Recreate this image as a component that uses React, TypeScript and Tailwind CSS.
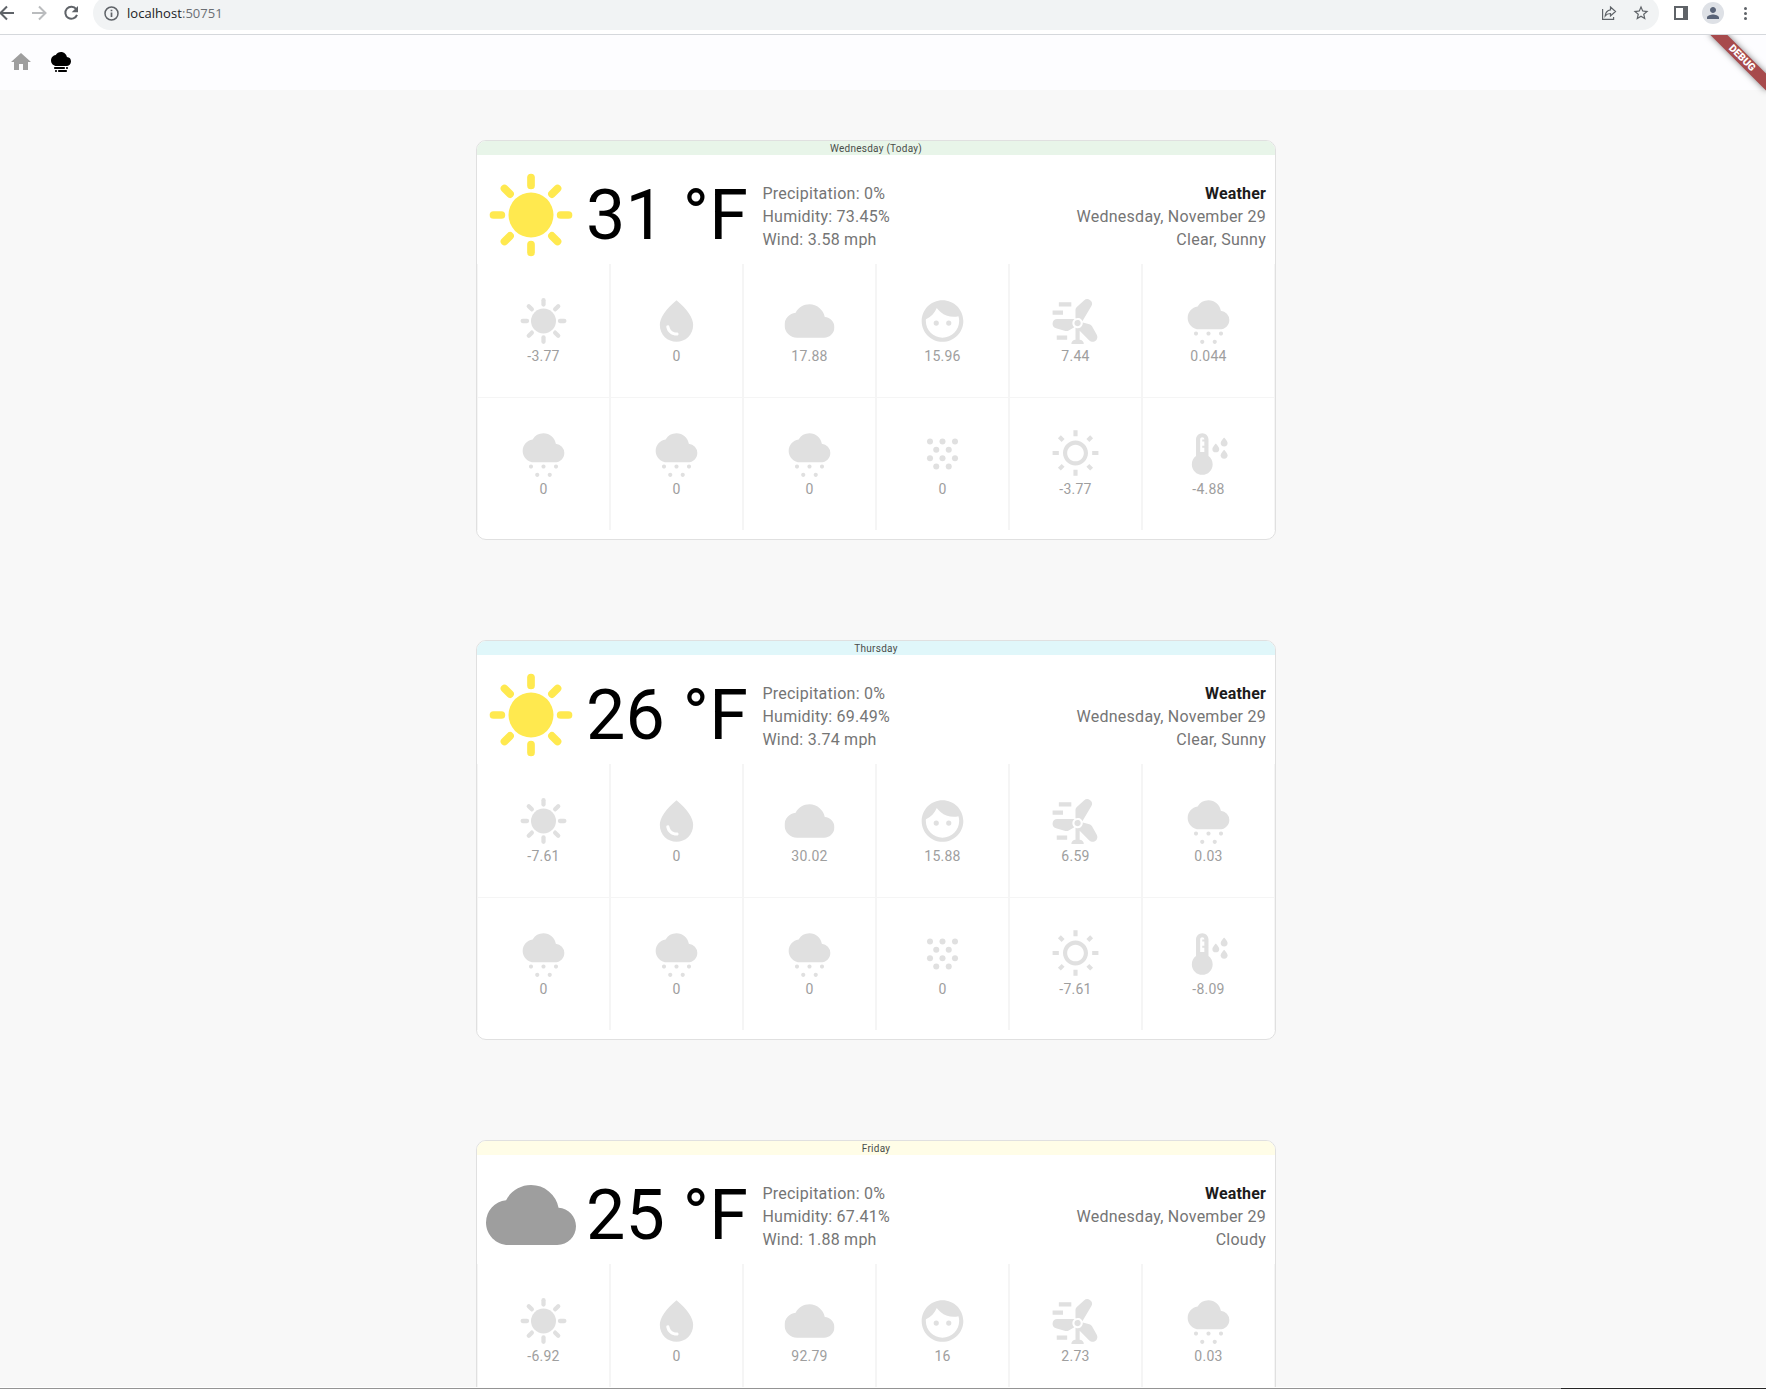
import type { ReactNode } from "react";
import { MdCloud, MdCloudySnowing, MdFace, MdFoggy, MdHome, MdOutlineWbSunny, MdPerson, MdStarOutline, MdWaterDrop, MdWindPower } from "react-icons/md";

const rays = [0, 45, 90, 135, 180, 225, 270, 315];

function Sun({ className }: { className: string }) {
  return (
    <svg viewBox="0 0 24 24" className={className} fill="currentColor" stroke="currentColor">
      <circle cx="12" cy="12" r="6" stroke="none" />
      {rays.map((a) => (
        <path key={a} d="M12 2v2.1" strokeWidth="2.05" strokeLinecap="round" transform={`rotate(${a} 12 12)`} />
      ))}
    </svg>
  );
}

const flakes: [number, number][] = [
  [6, 6], [12, 6], [18, 6], [9, 10], [15, 10], [6, 14], [12, 14], [18, 14], [9, 18], [15, 18],
];

function Flakes() {
  return (
    <svg viewBox="0 0 24 24" className="size-[50px]" fill="currentColor">
      {flakes.map(([x, y]) => (
        <circle key={`${x}-${y}`} cx={x} cy={y} r="1.45" />
      ))}
    </svg>
  );
}

const drops: [number, number][] = [[19.5, 4.1], [15.5, 6.9], [19.5, 10]];

function DewPoint() {
  return (
    <svg viewBox="0 0 24 24" className="size-[50px]" fill="currentColor">
      <path
        fillRule="evenodd"
        d="M12 13V5c0-1.66-1.34-3-3-3S6 3.34 6 5v8c-1.21.91-2 2.37-2 4 0 2.76 2.24 5 5 5s5-2.24 5-5c0-1.63-.79-3.09-2-4zM8 11V5c0-.55.45-1 1-1s1 .45 1 1h-1v1h1v2h-1v1h1v2H8z"
      />
      {drops.map(([x, y]) => (
        <path key={y} d="M0 0S-1.65 1.700-1.650 2.650a1.650 1.650 0 0 0 3.300 0C1.650 1.700 0 0 0 0z" transform={`translate(${x} ${y})`} />
      ))}
    </svg>
  );
}

const snow = <MdCloudySnowing className="size-[50px]" />;
const cellIcons: ReactNode[] = [
  <Sun className="size-[50px]" />,
  <MdWaterDrop className="size-[50px]" />,
  <MdCloud className="size-[50px]" />,
  <MdFace className="size-[50px]" />,
  <MdWindPower className="size-[50px]" />,
  snow,
  snow,
  snow,
  snow,
  <Flakes />,
  <MdOutlineWbSunny className="size-[50px]" />,
  <DewPoint />,
];

type Day = {
  title: string;
  strip: string;
  icon: ReactNode;
  temp: string;
  humidity: string;
  wind: string;
  sky: string;
  values: string[];
};

const days: Day[] = [
  {
    title: "Wednesday (Today)",
    strip: "bg-[#e8f5e9]",
    icon: <Sun className="size-[90px] text-[#ffe94f]" />,
    temp: "31 °F",
    humidity: "73.45%",
    wind: "3.58 mph",
    sky: "Clear, Sunny",
    values: ["-3.77", "0", "17.88", "15.96", "7.44", "0.044", "0", "0", "0", "0", "-3.77", "-4.88"],
  },
  {
    title: "Thursday",
    strip: "bg-[#e0f7fa]",
    icon: <Sun className="size-[90px] text-[#ffe94f]" />,
    temp: "26 °F",
    humidity: "69.49%",
    wind: "3.74 mph",
    sky: "Clear, Sunny",
    values: ["-7.61", "0", "30.02", "15.88", "6.59", "0.03", "0", "0", "0", "0", "-7.61", "-8.09"],
  },
  {
    title: "Friday",
    strip: "bg-[#fffde7]",
    icon: <MdCloud className="size-[90px] text-[#9e9e9e]" />,
    temp: "25 °F",
    humidity: "67.41%",
    wind: "1.88 mph",
    sky: "Cloudy",
    values: ["-6.92", "0", "92.79", "16", "2.73", "0.03"],
  },
];

function DayCard({ day }: { day: Day }) {
  return (
    <section className="h-[400px] w-[800px] shrink-0 overflow-hidden rounded-[10px] border border-[#e0e0e0] bg-white">
      <h2 className={`h-[14px] pt-px text-center text-[10px] leading-[14px] tracking-[0.25px] text-[#4a4d4a] ${day.strip}`}>{day.title}</h2>
      <div className="flex h-[109px] items-start pt-[15px] pr-[9px] pl-[9px]">
        {day.icon}
        <div className="ml-[10px] w-[176.4px] pt-px text-[70px] leading-[88px] tracking-[0.25px] whitespace-pre text-black">{day.temp}</div>
        <div className="pt-[12px] text-[16px] leading-[23px] tracking-[0.25px] text-[#757575]">
          <p>Precipitation: 0%</p>
          <p>Humidity: {day.humidity}</p>
          <p>Wind: {day.wind}</p>
        </div>
        <div className="ml-auto pt-[12px] text-right text-[16px] leading-[23px] tracking-[0.25px] text-[#757575]">
          <p className="font-bold tracking-[0.15px] text-[#1c1c1c]">Weather</p>
          <p>Wednesday, November 29</p>
          <p>{day.sky}</p>
        </div>
      </div>
      <div className="grid grid-cols-6">
        {day.values.map((value, i) => (
          <div
            key={i}
            className={`flex h-[133px] flex-col items-center border-x border-[#f5f5f5] text-[#e0e0e0] ${i > 5 ? "border-t pt-[31px]" : "pt-[32px]"}`}
          >
            <div className="translate-x-[0.5px] pr-px">{cellIcons[i]}</div>
            <span className="text-[14px] leading-[20px] tracking-[0.25px] text-[#9e9e9e]">{value}</span>
          </div>
        ))}
      </div>
    </section>
  );
}

function BrowserBar() {
  return (
    <header className="flex h-[35px] shrink-0 items-start overflow-hidden border-b border-[#d5d8dc] bg-white text-[#5f6368]">
      <svg className="h-[26px] w-[93px] shrink-0" viewBox="0 0 93 26" fill="none" strokeWidth="2">
        <path d="M14 13H1M7 6.500L.5 13 7 19.500" stroke="#5f6368" />
        <path d="M32 13h13M39 6.500l6.500 6.500L39 19.500" stroke="#babcbe" />
        <path d="M76.200 9.200A6 6 0 1 0 77 14.800" stroke="#5f6368" />
        <path d="M78 6v6.300h-6.300z" fill="#5f6368" />
      </svg>
      <div className="-mt-[4px] flex h-[34px] w-[1566px] items-center rounded-full bg-[#f1f3f4] pr-[9px] pl-[11px]">
        <svg className="size-[15px]" viewBox="0 0 15 15" fill="none" stroke="#5f6368" strokeWidth="1.500">
          <circle cx="7.500" cy="7.500" r="6.500" />
          <path d="M7.500 6.600v4.400M7.500 3.800v1.500" strokeWidth="1.700" />
        </svg>
        <span className="ml-[8px] font-['Open_Sans'] text-[13px] leading-[18px] tracking-[0.05px] text-[#202124]">
          localhost<span className="text-[#6b6f74]">:50751</span>
        </span>
        <svg className="mr-[15px] ml-auto size-[16px]" viewBox="0 0 16 16" fill="none" stroke="#5f6368" strokeWidth="1.200">
          <path d="M1.600 4v10.400h11V12M9.500 2l5 4.500-5 4.500V8.500c-2.800 0-4.200.8-5.300 2.300.3-3 1.800-5.500 5.300-6z" />
        </svg>
        <MdStarOutline className="size-[18px]" />
      </div>
      <svg className="mt-[6px] ml-[15px] size-[14px]" viewBox="0 0 14 14">
        <path d="M0 0h14v14H0zM2 2v10h7V2z" fill="#5f6368" fillRule="evenodd" />
      </svg>
      <div className="mt-[2px] ml-[14px] flex size-[22px] items-center justify-center rounded-full bg-[#dee1e6] text-[#5a6478]">
        <MdPerson className="size-[18px]" />
      </div>
      <div className="mt-[7px] ml-[20px] flex flex-col gap-[2px]">
        <i className="size-[3px] rounded-full bg-[#5f6368]" />
        <i className="size-[3px] rounded-full bg-[#5f6368]" />
        <i className="size-[3px] rounded-full bg-[#5f6368]" />
      </div>
    </header>
  );
}

export default function App() {
  return (
    <div className="flex h-[1389px] w-[1766px] flex-col overflow-hidden bg-[#f8f8f8] font-[Roboto,sans-serif]">
      <BrowserBar />
      <div className="relative flex min-h-0 flex-1 flex-col overflow-hidden">
        <nav className="flex h-[55px] shrink-0 gap-[16px] bg-[#fdfdff] pt-[15px] pl-[9px]">
          <MdHome className="size-[24px] text-[#9e9e9e]" />
          <MdFoggy className="size-[24px] text-black" />
        </nav>
        <main className="flex min-h-0 flex-1 flex-col items-center gap-[100px] overflow-hidden pt-[50px] pr-[14px]">
          {days.map((day) => (
            <DayCard key={day.title} day={day} />
          ))}
        </main>
        <div className="absolute -top-px right-0 size-0 rotate-45">
          <div className="absolute top-[27.5px] -left-[40px] h-[12px] w-[80px] bg-[#a74a4c] text-center text-[10.2px] leading-[12px] font-black text-white shadow-[0_0_6px_rgba(0,0,0,0.5)]">
            DEBUG
          </div>
        </div>
      </div>
      <footer className="flex h-[2px] shrink-0 border-t border-white">
        <div className="h-px w-[1561px] bg-[#949494]" />
        <div className="h-px flex-1 bg-[#262626]" />
      </footer>
    </div>
  );
}
